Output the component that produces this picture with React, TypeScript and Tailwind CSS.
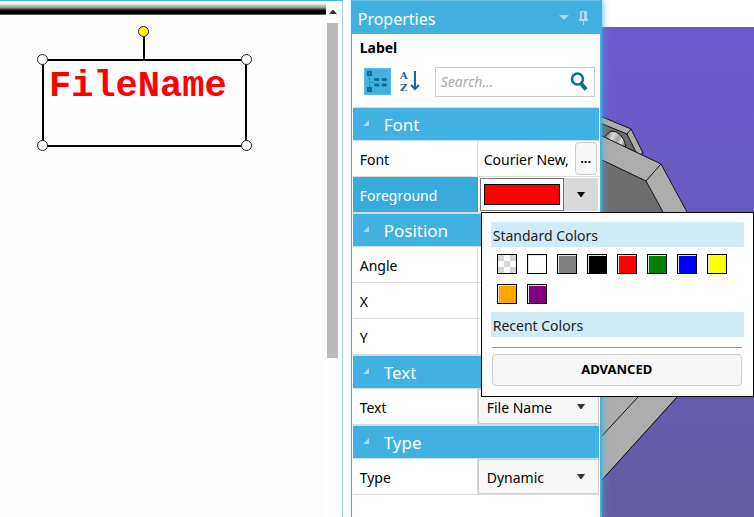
import React from 'react';

type SectionProps = {
  title: string;
  children: React.ReactNode;
};

type RowProps = {
  id: string;
  label: string;
  selected?: boolean;
  children?: React.ReactNode;
};

const standardColors = [
  { name: 'White', fill: 'bg-white' },
  { name: 'Gray', fill: 'bg-[#808080]' },
  { name: 'Black', fill: 'bg-black' },
  { name: 'Red', fill: 'bg-[#ff0000]' },
  { name: 'Green', fill: 'bg-[#008000]' },
  { name: 'Blue', fill: 'bg-[#0000ff]' },
  { name: 'Yellow', fill: 'bg-[#ffff00]' },
  { name: 'Orange', fill: 'bg-[#ffa500]' },
  { name: 'Purple', fill: 'bg-[#800080]' },
];

const DownArrow = ({ className = '' }: { className?: string }) => (
  <svg className={className} width="8" height="5" viewBox="0 0 8 5" fill="currentColor" aria-hidden="true">
    <path d="M0 0h8L4.500 5h-1z" />
  </svg>
);

const Section = ({ title, children }: SectionProps) => (
  <section>
    <h2 className="flex h-[34px] items-center border-y border-[#c9dfea] bg-[#41b1e1] pt-0.5 pl-2.5 text-[17px] text-white">
      <button type="button" aria-label={`Collapse ${title}`} className="mr-3.5 h-[7px] w-[7px]">
        <svg className="-mt-1 block" width="6" height="6" viewBox="0 0 6 6" aria-hidden="true">
          <path d="M6 0v6H0z" fill="#a9dbf1" />
        </svg>
      </button>
      {title}
    </h2>
    {children}
  </section>
);

const Row = ({ id, label, selected, children }: RowProps) => (
  <div className="flex h-9 border-b border-[#dcdcdc]">
    <label
      htmlFor={id}
      className={
        selected
          ? 'flex w-[125px] shrink-0 items-center bg-[#3aa9dc] pt-0.5 pl-[7px] text-white'
          : 'flex w-[125px] shrink-0 items-center border-r border-[#dcdcdc] pt-0.5 pl-[7px]'
      }
    >
      {label}
    </label>
    <div className="relative flex min-w-0 flex-1">
      {children ?? <input id={id} type="text" className="w-full min-w-0 px-1.5 outline-none" />}
    </div>
  </div>
);

const Choice = ({ id, value }: { id: string; value: string }) => (
  <>
    <select
      id={id}
      defaultValue={value}
      className="w-full appearance-none border border-[#cccccc] bg-[#f7f7f7] pt-0.5 pl-2 outline-none"
    >
      <option>{value}</option>
    </select>
    <DownArrow className="pointer-events-none absolute top-[15px] right-3.5 text-[#333333]" />
  </>
);

const ColorPopup = () => (
  <div className="absolute top-[35px] left-[3px] z-20 w-[273px] border border-black bg-white px-[9px] pt-[9px] pb-2.5">
    <h3 className="h-[25px] bg-[#d0ebf8] pl-0.5 leading-[28px] text-[#222222]">Standard Colors</h3>
    <div className="flex flex-wrap gap-2.5 pt-[7px] pb-2 pl-1.5">
      <button type="button" aria-label="Transparent" className="h-5 w-5 border border-black bg-white">
        <svg className="block" width="18" height="18" viewBox="0 0 18 18" aria-hidden="true">
          <path d="M0 0h6v6H0zM12 0h6v6h-6zM6 6h6v6H6zM0 12h6v6H0zM12 12h6v6h-6z" fill="#d6d6d6" />
        </svg>
      </button>
      {standardColors.map((color) => (
        <button
          key={color.name}
          type="button"
          aria-label={color.name}
          className="h-5 w-5 border border-black bg-[#e4e4e4] pt-px pl-px"
        >
          <span className={`block h-full w-full ${color.fill}`} />
        </button>
      ))}
    </div>
    <h3 className="h-[25px] bg-[#d0ebf8] pl-0.5 leading-[28px] text-[#222222]">Recent Colors</h3>
    <hr className="mt-2.5 mr-0.5 ml-px border-[#999999]" />
    <div className="mt-1.5 mr-0.5 ml-px">
      <button type="button" className="h-8 w-full rounded border border-[#cccccc] bg-[#f7f7f7] text-[13px] font-bold">
        ADVANCED
      </button>
    </div>
  </div>
);

const Editor = () => (
  <main className="flex min-w-0 flex-1 border-t border-[#41b1e1] border-r border-r-[#9bd6ef] bg-[#fdfdfd]">
    <div className="relative min-w-0 flex-1">
      <div className="h-3.5 border-b border-[#555555] bg-linear-to-b from-white from-15% via-[#999999] via-50% to-black to-80%" />

      {/* Selected label with its resize and rotate handles */}
      <div className="absolute top-[58px] left-[42px] h-[88px] w-[205px] border-2 border-black">
        <span className="ml-[5px] block font-['Courier_New','Liberation_Mono',monospace] text-[37px] leading-[50px] font-bold text-[#ff0000]">
          FileName
        </span>
        <div className="absolute -top-[26px] left-[99px] h-[26px] w-0.5 bg-black" />
        <div className="absolute -top-[35px] left-[94px] h-[11px] w-[11px] rounded-full border border-[#222222] bg-[#ffff00]" />
        <div className="absolute -top-[7px] -left-[7px] h-[11px] w-[11px] rounded-full border border-[#222222] bg-white" />
        <div className="absolute -top-[7px] -right-[7px] h-[11px] w-[11px] rounded-full border border-[#222222] bg-white" />
        <div className="absolute -bottom-[6px] -left-[7px] h-[11px] w-[11px] rounded-full border border-[#222222] bg-white" />
        <div className="absolute -right-[7px] -bottom-[6px] h-[11px] w-[11px] rounded-full border border-[#222222] bg-white" />
      </div>
    </div>

    {/* Scrollbar */}
    <div className="flex w-4 flex-col items-center bg-white pr-0.5">
      <div className="flex h-[22px] items-center justify-center">
        <svg width="8" height="4" viewBox="0 0 8 4" aria-hidden="true">
          <path d="M0 4 3.500 0h1L8 4z" fill="#333333" />
        </svg>
      </div>
      <div className="h-[65%] w-[11px] bg-[#b9b9b9]" />
    </div>
  </main>
);

const Properties = () => (
  <aside className="relative z-10 ml-2 flex w-[251px] shrink-0 flex-col border-r-2 border-l border-[#41b1e1] bg-white shadow-[0_0_8px_#41b1e1] [clip-path:inset(0_-160px_0_0)]">
    <header className="flex h-[34px] shrink-0 items-center border-t border-[#69c1e7] bg-[#41b1e1] pr-3 pl-1.5 text-white">
      <h1 className="flex-1 pt-0.5 text-[16px]">Properties</h1>
      <button type="button" aria-label="Panel menu" className="mr-2.5">
        <svg width="10" height="5" viewBox="0 0 10 5" aria-hidden="true">
          <path d="M0 0h10L5 5z" fill="#a9dbf1" />
        </svg>
      </button>
      <button type="button" aria-label="Pin panel">
        <svg width="9" height="14" viewBox="0 0 9 14" aria-hidden="true">
          <path d="M1 0h7v8h1v2H5v4H4v-4H0V8h1zM3 1v7h2V1z" fill="#a9dbf1" fillRule="evenodd" />
        </svg>
      </button>
    </header>

    <div className="pr-px pl-px">
      <p className="h-[33px] pt-[3px] pl-[7px] text-[14px] font-bold">Label</p>
      <div className="flex h-10 items-start pr-1 pl-[11px]">
        <button
          type="button"
          aria-label="Group by category"
          className="mt-px flex h-[27px] w-[27px] items-center justify-center border border-[#5bbce6] bg-[#41b1e1]"
        >
          <svg width="21" height="21" viewBox="0 0 21 21" fill="none" stroke="#126b92" aria-hidden="true">
            <path d="M1 1h3v3H1zM1 17h3v3H1z" strokeWidth="2" />
            <path d="M2.500 5v11M3 11.500h4" strokeWidth="1" opacity="0.5" />
            <path d="M8.500 8.500h2.500M16 8.500h2.500M8.500 14h2.500M16 14h2.500" strokeWidth="3" strokeLinecap="round" />
          </svg>
        </button>
        <button type="button" aria-label="Sort alphabetically" className="mt-[3px] ml-2">
          <svg width="22" height="24" viewBox="0 0 22 24" aria-hidden="true">
            <text x="1" y="9" fontFamily="DejaVu Serif, serif" fontWeight="bold" fontSize="10" fill="#126b92">
              A
            </text>
            <text x="1" y="21" fontFamily="DejaVu Serif, serif" fontWeight="bold" fontSize="10" fill="#126b92">
              Z
            </text>
            <path d="M16 1v18M12 15l4 4 4-4" fill="none" stroke="#126b92" strokeWidth="2" />
          </svg>
        </button>
        <div className="relative ml-auto">
          <input
            type="text"
            aria-label="Search properties"
            placeholder="Search..."
            className="block h-[30px] w-40 border border-[#cccccc] pr-8 pb-0.5 pl-[5px] italic outline-none placeholder:text-[#aaaaaa]"
          />
          <svg
            className="absolute top-[5px] right-[7px]"
            width="18"
            height="20"
            viewBox="0 0 18 20"
            fill="none"
            stroke="#126b92"
            aria-hidden="true"
          >
            <circle cx="7.500" cy="7" r="5.500" strokeWidth="2.500" />
            <path d="M11 11.500l5 6" strokeWidth="4" />
          </svg>
        </div>
      </div>

      <Section title="Font">
        <Row id="font" label="Font">
          <input
            id="font"
            type="text"
            readOnly
            defaultValue="Courier New,"
            className="min-w-0 flex-1 pt-0.5 pl-1.5 outline-none"
          />
          <button
            type="button"
            aria-label="Choose font"
            className="my-px mr-0.5 w-[22px] shrink-0 rounded border border-[#cccccc] bg-[#f7f7f7] text-[13px] font-bold"
          >
            ...
          </button>
        </Row>
        <Row id="foreground" label="Foreground" selected>
          <div className="my-px mr-px ml-0.5 flex flex-1 bg-[#d9d9d9]">
            <div className="flex-1 border border-[#777777] bg-white px-[3px] py-[5px]">
              <div className="h-full border border-black bg-[#ff0000]" />
            </div>
            <button
              id="foreground"
              type="button"
              aria-label="Pick foreground color"
              aria-expanded="true"
              className="flex w-[34px] items-center justify-center"
            >
              <DownArrow />
            </button>
          </div>
          <ColorPopup />
        </Row>
      </Section>

      <Section title="Position">
        <Row id="angle" label="Angle" />
        <Row id="x" label="X" />
        <Row id="y" label="Y" />
      </Section>

      <Section title="Text">
        <Row id="text" label="Text">
          <Choice id="text" value="File Name" />
        </Row>
      </Section>

      <Section title="Type">
        <Row id="type" label="Type">
          <Choice id="type" value="Dynamic" />
        </Row>
      </Section>
    </div>
  </aside>
);

const Viewport = () => (
  <div className="w-[20.2%] shrink-0 overflow-hidden pt-[27px]">
    <div className="h-full bg-linear-to-b from-[#6d59d0] to-[#625ba0]">
      <svg width="152" height="490" viewBox="0 0 152 490" stroke="#111111" strokeLinejoin="round" aria-hidden="true">
        <defs>
          <linearGradient id="rod" x1="0" y1="0.300" x2="1" y2="0.700">
            <stop offset="0" stopColor="#666666" />
            <stop offset="0.350" stopColor="#dddddd" />
            <stop offset="0.600" stopColor="#a0a0a0" />
            <stop offset="0.800" stopColor="#dddddd" />
            <stop offset="1" stopColor="#777777" />
          </linearGradient>
        </defs>
        {/* Small bracket at the back */}
        <path d="M-2 89 29 102 41 126 38 128-2 110z" fill="#adadad" />
        <path d="M-2 96 25 107 34 125-2 110z" fill="#6c6c6c" />
        <path d="M29 102 25 107" />
        <path d="M0 104 3 109H0z" fill="#5265e0" stroke="none" />
        <path d="M2 110 9 104Q20 104 24 119L22 121z" fill="url(#rod)" />
        {/* Large plate */}
        <path d="M-2 108 59 137 85 185 130 300 75 370-2 455z" fill="#adadad" />
        <path d="M-2 132 44 154 61 185 100 280 60 345H-2z" fill="#6c6c6c" />
        <path d="M59 137 44 154" />
        {/* Lower edge */}
        <path d="M-2 350H94L75 370-2 455z" fill="#adadad" stroke="none" />
        <path d="M94 350 75 370-2 455M55 350 36 370-2 411" fill="none" />
      </svg>
    </div>
  </div>
);

export default function App() {
  return (
    <div className="flex h-screen overflow-hidden bg-white font-['Noto_Sans','Open_Sans',sans-serif] text-[14px] text-black">
      <Editor />
      <Properties />
      <Viewport />
    </div>
  );
}
